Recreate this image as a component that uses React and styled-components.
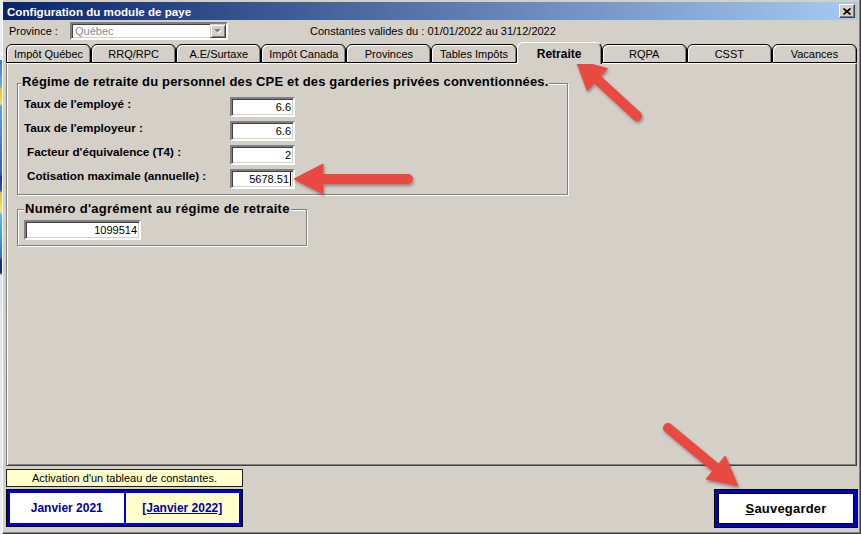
import React from "react";
import styled, { createGlobalStyle } from "styled-components";

const GlobalStyle = createGlobalStyle`
  html, body {
    margin: 0;
    padding: 0;
    background: #D4D0C8;
  }
  body {
    font-family: "Liberation Sans", Arial, sans-serif;
    font-size: 11px;
    color: #000;
  }
  * {
    box-sizing: border-box;
  }
`;

const Page = styled.div`
  position: relative;
  width: 861px;
  height: 534px;
  display: flex;
  overflow: hidden;
`;

const Desktop = styled.div`
  width: 2px;
  background: linear-gradient(
    to bottom,
    #e8eef8 0, #e8eef8 60px,
    #3a78d8 60px, #6aa8f0 86px,
    #f0c020 88px, #f8d860 104px,
    #58a0e8 106px, #2a60c0 175px,
    #203890 176px, #2a4fa8 190px,
    #f0c020 193px, #f8e080 212px,
    #50c0e8 214px, #3070c8 258px,
    #1a2a80 260px, #1a2a80 273px,
    #d8e4f0 275px, #e8eef4 100%
  );
`;

const Window = styled.div`
  flex: 1;
  display: flex;
  flex-direction: column;
  background: #D4D0C8;
  border-left: 1px solid #fff;
  border-right: 1px solid #404040;
  border-bottom: 1px solid #404040;
  box-shadow: inset -1px -1px 0 #808080;
  padding: 2px 2px 0 0;
`;

const TitleBar = styled.div`
  height: 18px;
  display: flex;
  align-items: center;
  justify-content: space-between;
  padding: 0 3px 0 4px;
  background: linear-gradient(to right, #0A246A, #A6CAF0);
  color: #fff;
  font-weight: 700;
  font-size: 11.6px;
`;

const CloseButton = styled.div`
  width: 16px;
  height: 14px;
  display: flex;
  align-items: center;
  justify-content: center;
  background: #D4D0C8;
  border: 1px solid;
  border-color: #fff #404040 #404040 #fff;
  box-shadow: inset -1px -1px 0 #808080;
`;

const TopRow = styled.div`
  height: 22px;
  display: flex;
  align-items: center;
  padding-left: 6px;
`;

const ProvinceLabel = styled.span`
  width: 61px;
`;

const Select = styled.div`
  width: 158px;
  height: 18px;
  display: flex;
  align-items: center;
  padding-left: 3px;
  background: #fff;
  color: #8c8c8c;
  border: 2px solid;
  border-color: #808080 #fff #fff #808080;
  box-shadow: inset 1px 1px 0 #404040, inset -1px -1px 0 #D4D0C8;
`;

const DropButton = styled.div`
  width: 16px;
  height: 14px;
  margin-left: auto;
  display: flex;
  align-items: center;
  justify-content: center;
  background: #D4D0C8;
  border: 1px solid;
  border-color: #D4D0C8 #404040 #404040 #D4D0C8;
  box-shadow: inset 1px 1px 0 #fff, inset -1px -1px 0 #808080;
`;

const Validity = styled.span`
  margin-left: 82px;
`;

const Tabs = styled.div`
  height: 21px;
  display: flex;
  align-items: flex-end;
  margin: 0 1px 0 3px;
`;

const Tab = styled.div`
  flex: 1;
  position: relative;
  z-index: ${(p) => (p.$active ? 2 : 1)};
  height: ${(p) => (p.$active ? 22 : 19)}px;
  margin-bottom: ${(p) => (p.$active ? -1 : 0)}px;
  display: flex;
  align-items: center;
  justify-content: center;
  padding-top: ${(p) => (p.$active ? 0 : 1)}px;
  background: #D4D0C8;
  border: 1px solid #000;
  border-top-color: ${(p) => (p.$active ? "#fff" : "#000")};
  border-left-color: ${(p) => (p.$active ? "#fff" : "#000")};
  border-bottom: ${(p) => (p.$active ? "none" : "1px solid #000")};
  border-radius: 6px 6px 0 0;
  box-shadow: ${(p) =>
    p.$active ? "inset -1px 0 0 #808080" : "inset 1px 1px 0 #fff, inset -1px 0 0 #808080"};
  font-weight: ${(p) => (p.$active ? 700 : 400)};
  font-size: ${(p) => (p.$active ? 12 : 11)}px;
`;

const Panel = styled.div`
  flex: 1;
  margin: 0 1px 0 3px;
  padding: 19px 0 0 10px;
  border: 1px solid;
  border-color: #fff #404040 #404040 #808080;
  box-shadow: inset 1px 0 0 #fff, inset -1px -1px 0 #808080;
`;

const Group = styled.div`
  position: relative;
  width: ${(p) => p.$width}px;
  height: ${(p) => p.$height}px;
  margin-top: ${(p) => p.$top || 0}px;
  padding: ${(p) => p.$pad};
  border: 1px solid #808080;
  box-shadow: 1px 1px 0 #fff, inset 1px 1px 0 #fff;
`;

const GroupTitle = styled.span`
  position: absolute;
  top: ${(p) => p.$top}px;
  left: ${(p) => p.$left}px;
  padding: 0 1px;
  line-height: 14px;
  background: #D4D0C8;
  font-size: 13px;
  font-weight: 700;
  letter-spacing: ${(p) => p.$spacing}px;
  white-space: nowrap;
`;

const Rows = styled.div`
  display: flex;
  flex-direction: column;
  gap: 4px;
`;

const Row = styled.div`
  display: grid;
  grid-template-columns: 212px 65px;
  height: 20px;
`;

const Label = styled.span`
  padding-left: ${(p) => p.$indent}px;
  line-height: 14px;
  font-size: 11.7px;
  font-weight: 700;
  white-space: nowrap;
`;

const Field = styled.div`
  width: ${(p) => p.$width || 65}px;
  height: 20px;
  display: flex;
  align-items: center;
  justify-content: flex-end;
  padding-right: 2px;
  background: #fff;
  border: 2px solid;
  border-color: #808080 #fff #fff #808080;
  box-shadow: inset 1px 1px 0 #404040, inset -1px -1px 0 #D4D0C8;
`;

const Caret = styled.span`
  width: 1px;
  height: 14px;
  margin-left: 1px;
  background: #000;
`;

const Bottom = styled.div`
  height: 67px;
  display: flex;
  align-items: flex-start;
  padding: 3px 0 0 3px;
`;

const Activation = styled.div`
  width: 237px;
  display: flex;
  flex-direction: column;
  gap: 2px;
`;

const Info = styled.div`
  height: 18px;
  display: flex;
  align-items: center;
  justify-content: center;
  background: #FFFFCC;
  border: 1px solid #202020;
`;

const Years = styled.div`
  height: 38px;
  display: grid;
  grid-template-columns: 1fr 1fr;
  gap: 2px;
  padding: 3px;
  background: #0000C8;
  border: 1px solid #000;
`;

const Year = styled.div`
  display: flex;
  align-items: center;
  justify-content: center;
  background: ${(p) => (p.$current ? "#FFFFCC" : "#fff")};
  color: #0000A8;
  font-size: 12px;
  font-weight: 700;
  text-decoration: ${(p) => (p.$current ? "underline" : "none")};
`;

const SaveButton = styled.div`
  width: 144px;
  height: 39px;
  margin: 20px 0 0 auto;
  display: flex;
  padding: 3px;
  background: #0000C8;
  border: 1px solid #000;
`;

const SaveFace = styled.div`
  flex: 1;
  display: flex;
  align-items: center;
  justify-content: center;
  background: #fff;
  border: 1px solid #000;
  font-size: 13px;
  font-weight: 700;
  letter-spacing: 0.2px;
`;

const Overlay = styled.svg`
  position: absolute;
  left: 0;
  top: 0;
  pointer-events: none;
`;

const tabs = [
  "Impôt Québec",
  "RRQ/RPC",
  "A.E/Surtaxe",
  "Impôt Canada",
  "Provinces",
  "Tables Impôts",
  "Retraite",
  "RQPA",
  "CSST",
  "Vacances",
];

const rates = [
  { label: "Taux de l'employé :", value: "6.6", indent: 6 },
  { label: "Taux de l'employeur :", value: "6.6", indent: 6 },
  { label: "Facteur d'équivalence (T4) :", value: "2", indent: 9 },
  { label: "Cotisation maximale (annuelle) :", value: "5678.51", indent: 9, caret: true },
];

const arrows = [
  { tail: [637, 116], tip: [576, 60] },
  { tail: [408, 179], tip: [294, 179] },
  { tail: [668, 428], tip: [738, 486] },
];

function Arrow({ tail, tip }) {
  const dx = tip[0] - tail[0];
  const dy = tip[1] - tail[1];
  const len = Math.hypot(dx, dy);
  const ux = dx / len;
  const uy = dy / len;
  const head = 29;
  const half = 15;
  const bx = tip[0] - ux * head;
  const by = tip[1] - uy * head;
  const px = -uy * half;
  const py = ux * half;
  const points = `${tip[0]},${tip[1]} ${bx + px},${by + py} ${bx - px},${by - py}`;
  return (
    <g>
      <line
        x1={tail[0]}
        y1={tail[1]}
        x2={bx + ux * 4}
        y2={by + uy * 4}
        stroke="#E8483F"
        strokeWidth="10"
        strokeLinecap="round"
      />
      <polygon points={points} fill="#E8483F" strokeLinejoin="round" stroke="#E8483F" strokeWidth="1" />
    </g>
  );
}

export default function App() {
  return (
    <Page>
      <GlobalStyle />
      <Desktop />
      <Window>
        <TitleBar>
          <span>Configuration du module de paye</span>
          <CloseButton>
            <svg width="8" height="7" viewBox="0 0 8 7">
              <path d="M0.5 0.5 L7.5 6.5 M7.5 0.5 L0.5 6.5" stroke="#000" strokeWidth="1.7" />
            </svg>
          </CloseButton>
        </TitleBar>

        <TopRow>
          <ProvinceLabel>Province :</ProvinceLabel>
          <Select>
            Québec
            <DropButton>
              <svg width="8" height="5" viewBox="0 0 8 5">
                <polygon points="1,1 8,1 4.5,4.5" fill="#fff" />
                <polygon points="0,0 7,0 3.5,3.5" fill="#808080" />
              </svg>
            </DropButton>
          </Select>
          <Validity>Constantes valides du : 01/01/2022 au 31/12/2022</Validity>
        </TopRow>

        <Tabs>
          {tabs.map((t) => (
            <Tab key={t} $active={t === "Retraite"}>
              {t}
            </Tab>
          ))}
        </Tabs>

        <Panel>
          <Group $width={551} $height={112} $pad="13px 0 0 0">
            <GroupTitle $top={-9} $left={3} $spacing={0.16}>
              Régime de retraite du personnel des CPE et des garderies privées conventionnées.
            </GroupTitle>
            <Rows>
              {rates.map((r) => (
                <Row key={r.label}>
                  <Label $indent={r.indent}>{r.label}</Label>
                  <Field>
                    {r.value}
                    {r.caret && <Caret />}
                  </Field>
                </Row>
              ))}
            </Rows>
          </Group>

          <Group $width={290} $height={37} $top={14} $pad="10px 0 0 6px">
            <GroupTitle $top={-8} $left={6} $spacing={0.28}>
              Numéro d'agrément au régime de retraite
            </GroupTitle>
            <Field $width={117}>1099514</Field>
          </Group>
        </Panel>

        <Bottom>
          <Activation>
            <Info>Activation d'un tableau de constantes.</Info>
            <Years>
              <Year>Janvier 2021</Year>
              <Year $current>[Janvier 2022]</Year>
            </Years>
          </Activation>
          <SaveButton>
            <SaveFace>
              <u>S</u>auvegarder
            </SaveFace>
          </SaveButton>
        </Bottom>
      </Window>

      <Overlay width="861" height="534" viewBox="0 0 861 534">
        <defs>
          <filter id="shadow" x="-20%" y="-20%" width="140%" height="140%">
            <feDropShadow dx="1" dy="2" stdDeviation="1.5" floodColor="#000" floodOpacity="0.35" />
          </filter>
        </defs>
        <g filter="url(#shadow)">
          {arrows.map((a, i) => (
            <Arrow key={i} tail={a.tail} tip={a.tip} />
          ))}
        </g>
      </Overlay>
    </Page>
  );
}
